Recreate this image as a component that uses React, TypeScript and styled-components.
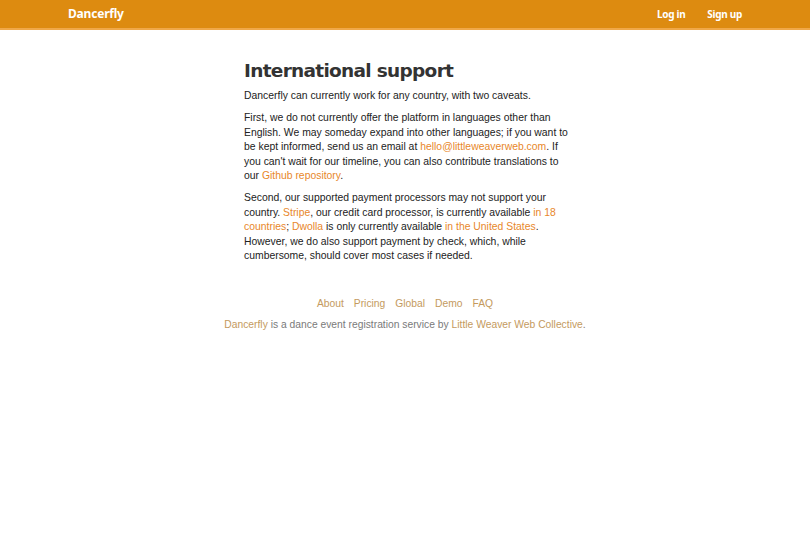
import React from "react";
import styled, { createGlobalStyle } from "styled-components";

const Global = createGlobalStyle`
  html, body { margin: 0; padding: 0; background: #fff; }
  body { font-family: "Liberation Sans", Arial, sans-serif; color: #222; }
  a { text-decoration: none; }
`;

const Header = styled.header`
  background: #dd8b10;
  border-bottom: 2px solid #f0a848;
  display: flex;
  align-items: center;
  justify-content: space-between;
  padding: 0 68px 1px 68px;
  box-sizing: border-box;
  height: 30px;
`;

const Brand = styled.a`
  font-family: "Noto Sans", sans-serif;
  font-weight: 700;
  font-size: 12px;
  color: #fff;
  letter-spacing: -0.2px;
`;

const Nav = styled.nav`
  display: flex;
  gap: 22px;
`;

const NavLink = styled.a`
  font-family: "Noto Sans", sans-serif;
  font-weight: 700;
  font-size: 10px;
  color: #fff;
  letter-spacing: -0.3px;
`;

const Main = styled.main`
  width: 326px;
  margin-left: calc(50% - 161px);
  padding-top: 27px;
`;

const Title = styled.h1`
  font-family: "DejaVu Sans", sans-serif;
  font-weight: 700;
  font-size: 18.5px;
  letter-spacing: -0.7px;
  color: #333;
  margin: 0 0 4px 0;
  line-height: 28px;
`;

const P = styled.p`
  font-size: 10.4px;
  line-height: 14.5px;
  margin: 0 0 7.5px 0;
  color: #222;
`;

const A = styled.a`
  color: #e8872a;
`;

const Footer = styled.footer`
  margin-top: 33px;
  display: flex;
  flex-direction: column;
  align-items: center;
  gap: 7px;
  font-size: 10.3px;
  line-height: 14px;
  color: #7a7a7a;
`;

const FooterNav = styled.div`
  display: flex;
  gap: 10px;
`;

const FLink = styled.a`
  color: #c49a5e;
`;

export default function App() {
  return (
    <>
      <Global />
      <Header>
        <Brand href="#">Dancerfly</Brand>
        <Nav>
          <NavLink href="#">Log in</NavLink>
          <NavLink href="#">Sign up</NavLink>
        </Nav>
      </Header>
      <Main>
        <Title>International support</Title>
        <P>Dancerfly can currently work for any country, with two caveats.</P>
        <P>
          First, we do not currently offer the platform in languages other than English. We may
          someday expand into other languages; if you want to be kept informed, send us an email
          at <A href="#">hello@littleweaverweb.com</A>. If you can't wait for our timeline, you can
          also contribute translations to our <A href="#">Github repository</A>.
        </P>
        <P>
          Second, our supported payment processors may not support your country.{" "}
          <A href="#">Stripe</A>, our credit card processor, is currently available{" "}
          <A href="#">in 18 countries</A>; <A href="#">Dwolla</A> is only currently available{" "}
          <A href="#">in the United States</A>. However, we do also support payment by check,
          which, while cumbersome, should cover most cases if needed.
        </P>
      </Main>
      <Footer>
        <FooterNav>
          <FLink href="#">About</FLink>
          <FLink href="#">Pricing</FLink>
          <FLink href="#">Global</FLink>
          <FLink href="#">Demo</FLink>
          <FLink href="#">FAQ</FLink>
        </FooterNav>
        <div>
          <FLink href="#">Dancerfly</FLink> is a dance event registration service by{" "}
          <FLink href="#">Little Weaver Web Collective</FLink>.
        </div>
      </Footer>
    </>
  );
}
